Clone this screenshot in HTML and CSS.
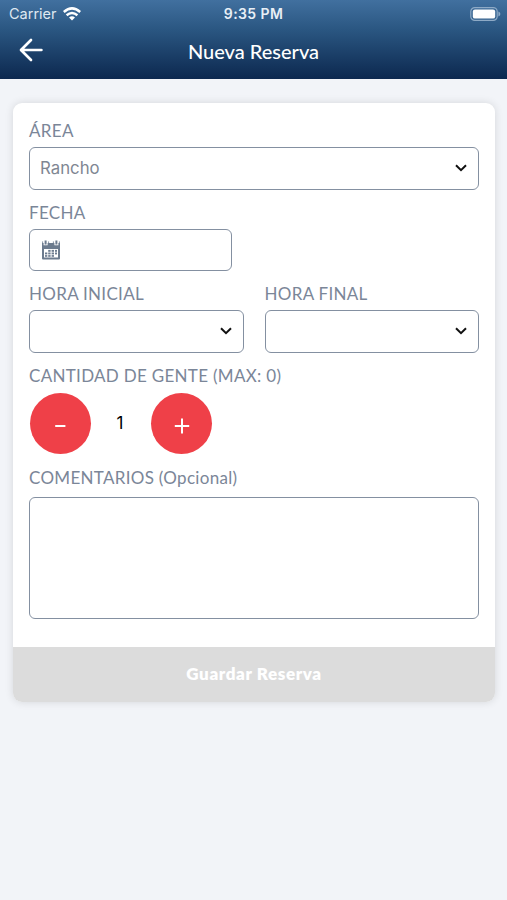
FILE: index.html
```html
<!DOCTYPE html>
<html lang="es">
<head>
    <meta charset="UTF-8">
    <meta name="viewport" content="width=device-width, initial-scale=1">
    <title>Nueva Reserva</title>
    <link rel="stylesheet" href="styles.css">
</head>
<body>
    <header class="header">
        <div class="status-bar">
            <div class="status-left">
                <span class="carrier">Carrier</span>
                <svg class="wifi" width="18" height="14" viewBox="0 0 18 14">
                    <path d="M0.8 5 Q9 -2.2 17.2 5" />
                    <path d="M3.6 8.3 Q9 3.7 14.4 8.3" />
                    <path class="dot" d="M6 10.5 Q9 8.2 12 10.5 L9 13.6 Z" />
                </svg>
            </div>
            <span class="time">9:35 PM</span>
            <div class="status-right">
                <svg width="31" height="14" viewBox="0 0 31 14">
                    <rect class="battery-case" x="0.8" y="0.6" width="26.4" height="12.8" rx="4" />
                    <rect class="battery-level" x="2.8" y="2.4" width="22.4" height="9.2" rx="2.2" />
                    <path class="battery-tip" d="M28.4 4.6 Q30.4 5.4 30.4 7 Q30.4 8.6 28.4 9.4 Z" />
                </svg>
            </div>
        </div>
        <div class="nav-bar">
            <button class="back" type="button" aria-label="Volver">
                <svg width="24" height="24" viewBox="0 0 24 24">
                    <path d="M12 2 L2 12 L12 22 M2.4 12 H22.4" />
                </svg>
            </button>
            <h1 class="title">Nueva Reserva</h1>
        </div>
    </header>

    <form class="card">
        <div class="card-body">
            <div class="field field-area">
                <label class="label" for="area">ÁREA</label>
                <div class="select">
                    <select id="area" name="area">
                        <option>Rancho</option>
                    </select>
                    <svg class="chevron" width="12" height="8" viewBox="0 0 12 8"><path d="M1 1.2 L6 6.2 L11 1.2" /></svg>
                </div>
            </div>

            <div class="field field-date">
                <label class="label" for="fecha">FECHA</label>
                <div class="date">
                    <svg class="calendar" width="20" height="20" viewBox="0 0 20 20">
                        <path class="frame" d="M1 3 H19 V18.4 Q19 19.4 18 19.4 H2 Q1 19.4 1 18.4 Z M3 9 V17.4 H17 V9 Z" fill-rule="evenodd" />
                        <path class="gap" d="M4.6 0 V5.2 M15.4 0 V5.2" />
                        <path class="ring" d="M4.6 0.4 V4.4 M15.4 0.4 V4.4" />
                        <path class="ring thin" d="M1.6 1.4 V4 M7.6 1.4 V4 M12.4 1.4 V4 M18.4 1.4 V4" />
                        <g class="days">
                            <rect x="7.2" y="9.9" width="2.4" height="1.9" /><rect x="10.6" y="9.9" width="2.4" height="1.9" /><rect x="14" y="9.9" width="2" height="1.9" />
                            <rect x="4" y="12.5" width="2.3" height="1.9" /><rect x="7.2" y="12.5" width="2.4" height="1.9" /><rect x="10.6" y="12.5" width="2.4" height="1.9" /><rect x="14" y="12.5" width="2" height="1.9" />
                            <rect x="4" y="15.1" width="2.3" height="1.7" /><rect x="7.2" y="15.1" width="2.4" height="1.7" /><rect x="10.6" y="15.1" width="2.4" height="1.7" />
                        </g>
                    </svg>
                    <input type="text" id="fecha" name="fecha">
                </div>
            </div>

            <div class="hours">
                <div class="field">
                    <label class="label" for="inicio">HORA INICIAL</label>
                    <div class="select">
                        <select id="inicio" name="inicio"></select>
                        <svg class="chevron" width="12" height="8" viewBox="0 0 12 8"><path d="M1 1.2 L6 6.2 L11 1.2" /></svg>
                    </div>
                </div>
                <div class="field">
                    <label class="label" for="final">HORA FINAL</label>
                    <div class="select">
                        <select id="final" name="final"></select>
                        <svg class="chevron" width="12" height="8" viewBox="0 0 12 8"><path d="M1 1.2 L6 6.2 L11 1.2" /></svg>
                    </div>
                </div>
            </div>

            <div class="field field-people">
                <span class="label">CANTIDAD DE GENTE (MAX: 0)</span>
                <div class="counter">
                    <button class="round" type="button" aria-label="Menos">
                        <svg width="20" height="20" viewBox="0 0 20 20"><path d="M4.2 12 H14.4" /></svg>
                    </button>
                    <span class="count">1</span>
                    <button class="round" type="button" aria-label="Más">
                        <svg width="20" height="20" viewBox="0 0 20 20"><path d="M2.8 12 H17.2 M10 4.5 V19.5" /></svg>
                    </button>
                </div>
            </div>

            <div class="field">
                <label class="label" for="comentarios">COMENTARIOS (Opcional)</label>
                <textarea id="comentarios" name="comentarios"></textarea>
            </div>
        </div>
        <button class="save" type="button">Guardar Reserva</button>
    </form>
</body>
</html>
```

FILE: styles.css
```css
* {
    box-sizing: border-box;
}

body {
    margin: 0;
    min-height: 900px;
    background: #f2f4f8;
    font-family: Lato, "Liberation Sans", sans-serif;
}

button, select, input, textarea {
    font: inherit;
    margin: 0;
}

/* header */
.header {
    height: 79px;
    background: linear-gradient(#41709f 0%, #2a5681 38%, #0c284f 100%);
    color: #fff;
}

.status-bar {
    display: grid;
    grid-template-columns: 1fr auto 1fr;
    align-items: center;
    height: 27px;
    padding: 0 6px 0 9px;
    font-family: Inter, sans-serif;
}

.status-left {
    display: flex;
    align-items: center;
    gap: 6px;
}

.carrier {
    font-size: 14.5px;
    color: #dfe8f1;
}

.wifi path {
    fill: none;
    stroke: #fff;
    stroke-width: 2.5;
}

.wifi .dot {
    fill: #fff;
    stroke: none;
}

.time {
    margin-right: 3px;
    font-size: 14px;
    font-weight: 600;
    letter-spacing: 0.4px;
    color: #e8eff6;
}

.status-right {
    display: flex;
    justify-content: flex-end;
}

.battery-case {
    fill: none;
    stroke: #8eaac6;
    stroke-width: 1.2;
}

.battery-level {
    fill: #fff;
}

.battery-tip {
    fill: #8eaac6;
}

.nav-bar {
    display: grid;
    grid-template-columns: 1fr auto 1fr;
    align-items: center;
    height: 46px;
    padding: 0 19px;
}

.back {
    display: flex;
    padding: 0;
    border: 0;
    background: none;
}

.back path {
    fill: none;
    stroke: #fff;
    stroke-width: 2.7;
    stroke-linecap: round;
    stroke-linejoin: round;
}

.title {
    margin: 1px 0 0;
    font-size: 20px;
    font-weight: 500;
}

/* form card */
.card {
    margin: 24px 12px 0 13px;
    border-radius: 9px;
    background: #fff;
    box-shadow: 0 0 8px rgba(0, 0, 0, 0.12);
    overflow: hidden;
}

.card-body {
    height: 544px;
    padding: 18px 16px 0;
}

.field {
    display: flex;
    flex-direction: column;
    gap: 6px;
}

.field-area {
    margin-bottom: 13px;
}

.field-date {
    width: 203px;
    margin-bottom: 13px;
}

.label {
    height: 20px;
    line-height: 20px;
    font-size: 17px;
    letter-spacing: 0.3px;
    color: #7b8698;
    white-space: nowrap;
}

.select {
    display: flex;
    align-items: center;
    height: 43px;
    padding: 0 11px 2px 10px;
    border: 1.5px solid #8490a1;
    border-radius: 6px;
}

.select select {
    flex: 1;
    min-width: 0;
    padding: 0;
    border: 0;
    appearance: none;
    background: none;
    color: #7f8793;
    font-family: Inter, sans-serif;
    font-size: 16.8px;
}

.chevron path {
    fill: none;
    stroke: #111;
    stroke-width: 2;
}

.date {
    display: flex;
    align-items: center;
    gap: 8px;
    height: 42px;
    padding: 0 11px;
    border: 1.5px solid #8490a1;
    border-radius: 6px;
}

.date input {
    flex: 1;
    min-width: 0;
    border: 0;
    background: none;
}

.calendar {
    fill: #6c7b8e;
}

.calendar .gap {
    stroke: #fff;
    stroke-width: 4;
}

.calendar .ring {
    stroke: #6c7b8e;
    stroke-width: 2;
}

.calendar .thin {
    stroke-width: 0.8;
}

.hours {
    display: grid;
    grid-template-columns: 1fr 1fr;
    gap: 21px;
    margin-bottom: 13px;
}

.field-people {
    gap: 7px;
    margin-bottom: 14px;
}

.counter {
    display: flex;
    align-items: center;
    padding-left: 1px;
}

.round {
    display: flex;
    align-items: center;
    justify-content: center;
    width: 61px;
    height: 61px;
    padding: 0;
    border: 0;
    border-radius: 50%;
    background: #ef4048;
}

.round path {
    fill: none;
    stroke: #fff;
    stroke-width: 2;
}

.count {
    width: 60px;
    padding: 0 2px 2px 0;
    text-align: center;
    font-family: Inter, sans-serif;
    font-size: 17px;
}

textarea {
    display: block;
    height: 122px;
    margin-top: 3px;
    border: 1.5px solid #8490a1;
    border-radius: 6px;
    resize: none;
}

.save {
    display: block;
    width: 100%;
    height: 55px;
    padding: 0 0 3px;
    border: 0;
    background: #dcdcdc;
    color: #fff;
    font-size: 17px;
    font-weight: 800;
    letter-spacing: 0.6px;
}
```
